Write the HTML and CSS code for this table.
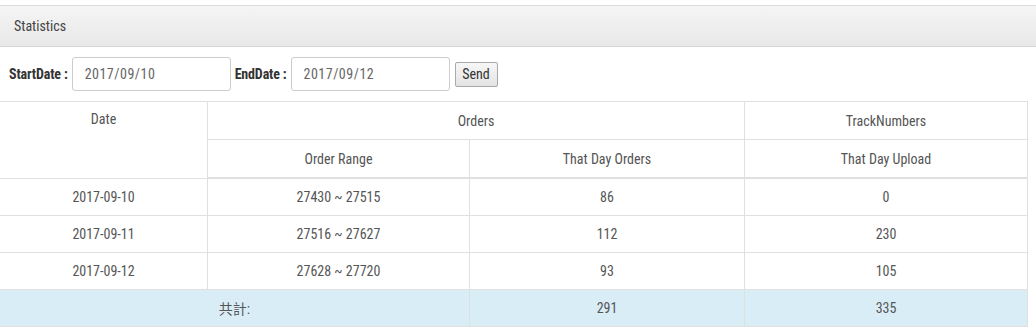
FILE: index.html
```html
<!DOCTYPE html>
<html>
<head>
<meta charset="utf-8">
<link rel="stylesheet" href="styles.css">
</head>
<body>
<div class="panel">
  <div class="panel-heading">Statistics</div>
  <form class="filter">
    <label class="lbl">StartDate :</label>
    <input class="date-input" type="text" value="2017/09/10">
    <label class="lbl">EndDate :</label>
    <input class="date-input" type="text" value="2017/09/12">
    <button type="button" class="send">Send</button>
  </form>
  <table class="stats">
    <colgroup>
      <col class="c1"><col class="c2"><col class="c3"><col class="c4">
    </colgroup>
    <thead>
      <tr>
        <th rowspan="2" class="top">Date</th>
        <th colspan="2">Orders</th>
        <th>TrackNumbers</th>
      </tr>
      <tr>
        <th>Order Range</th>
        <th>That Day Orders</th>
        <th>That Day Upload</th>
      </tr>
    </thead>
    <tbody>
      <tr><td>2017-09-10</td><td>27430 ~ 27515</td><td>86</td><td>0</td></tr>
      <tr><td>2017-09-11</td><td>27516 ~ 27627</td><td>112</td><td>230</td></tr>
      <tr><td>2017-09-12</td><td>27628 ~ 27720</td><td>93</td><td>105</td></tr>
      <tr class="total"><td colspan="2">共計:</td><td>291</td><td>335</td></tr>
    </tbody>
  </table>
</div>
</body>
</html>
```

FILE: styles.css
```css
html, body {
  margin: 0;
  padding: 0;
  background: #fff;
}
body {
  font-family: Roboto, "Noto Sans CJK SC", sans-serif;
  font-stretch: 75%;
  font-size: 14px;
  color: #555;
}
.panel {
  margin-top: 5px;
}
.panel-heading {
  height: 42px;
  box-sizing: border-box;
  border-top: 1px solid #dcdcdc;
  border-bottom: 1px solid #d6d6d6;
  background: linear-gradient(#f5f5f5, #e8e8e8);
  padding: 0 14px;
  line-height: 40px;
  font-size: 14px;
  color: #444;
}
.filter {
  display: flex;
  align-items: center;
  height: 34px;
  margin: 10px 0 10px 9px;
}
.lbl {
  font-weight: bold;
  letter-spacing: -0.15px;
  color: #333;
  margin-right: 4px;
}
.date-input {
  width: 159px;
  height: 34px;
  box-sizing: border-box;
  border: 1px solid #ccc;
  border-radius: 3px;
  padding: 0 12px;
  font-family: Roboto, sans-serif;
  font-stretch: 75%;
  letter-spacing: 0.5px;
  font-size: 14px;
  color: #666;
  margin-right: 4px;
}
.send {
  margin-left: 1px;
  height: 25px;
  width: 43px;
  padding: 0;
  border: 1px solid #a9a9a9;
  border-radius: 2px;
  background: linear-gradient(#f7f7f7, #e3e3e3);
  font-family: Roboto, sans-serif;
  font-stretch: 75%;
  font-size: 14px;
  color: #333;
}
.stats {
  border-collapse: collapse;
  width: 1029px;
  margin-left: -1px;
  table-layout: fixed;
}
.c1 { width: 208px; }
.c2 { width: 262px; }
.c3 { width: 275px; }
.c4 { width: 283px; }
.stats th, .stats td {
  border: 1px solid #e0e0e0;
  height: 36px;
  padding: 0;
  text-align: center;
  font-weight: normal;
  color: #555;
}
.stats th {
  height: 37px;
}
.stats th.top {
  vertical-align: top;
  padding-top: 9px;
}
.stats thead tr:last-child th {
  border-bottom-width: 2px;
}
.total td {
  background: #d9edf7;
}
```
